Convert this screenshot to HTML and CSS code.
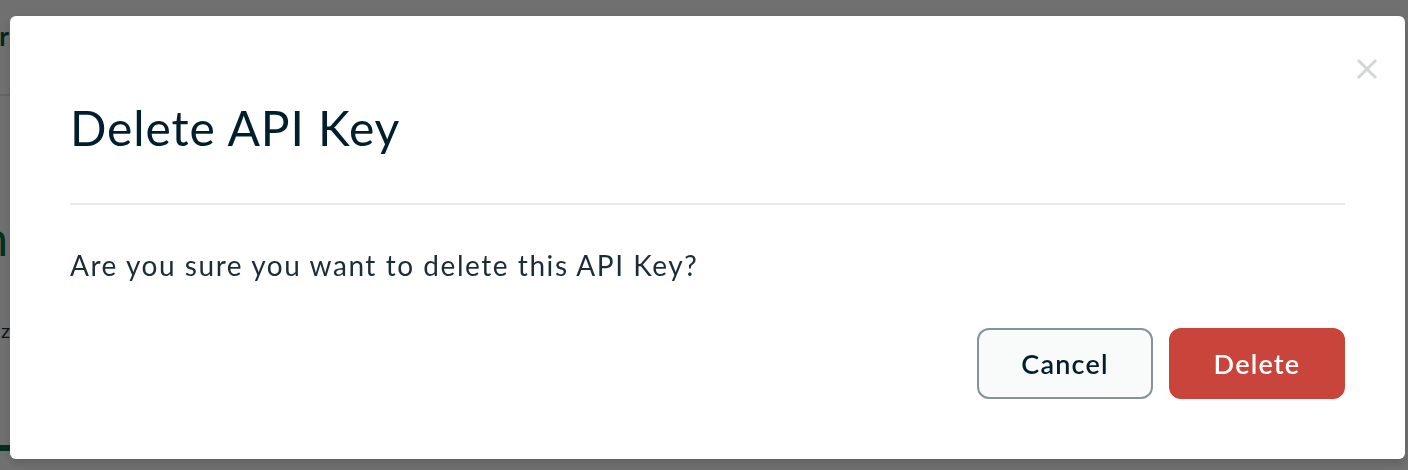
FILE: index.html
```html
<!DOCTYPE html>
<html lang="en">
<head>
<meta charset="utf-8">
<title>Delete API Key</title>
<link rel="stylesheet" href="styles.css">
</head>
<body>
  <div class="page">
    <div class="page-strip">
      <div class="strip-row strip-header"><span class="brand">Access Manager</span></div>
      <div class="strip-row strip-title"><span>Application</span></div>
      <div class="strip-row strip-sub"><span>Quiz</span></div>
      <div class="strip-bar"></div>
    </div>
  </div>
  <div class="overlay">
    <div class="modal" role="dialog" aria-labelledby="modal-title">
      <button class="close" aria-label="Close">
        <svg width="22" height="22" viewBox="0 0 22 22"><path d="M2 2 L20 20 M20 2 L2 20" stroke="#d4d7d7" stroke-width="3" stroke-linecap="butt" fill="none"/></svg>
      </button>
      <h1 id="modal-title" class="modal-title">Delete API Key</h1>
      <hr class="divider">
      <p class="modal-text">Are you sure you want to delete this API Key?</p>
      <div class="actions">
        <button class="btn btn-cancel">Cancel</button>
        <button class="btn btn-danger">Delete</button>
      </div>
    </div>
  </div>
</body>
</html>
```
FILE: styles.css
```css
* { box-sizing: border-box; }
html, body {
  margin: 0;
  padding: 0;
  width: 1408px;
  height: 470px;
  overflow: hidden;
  background: #ffffff;
  font-family: Lato, "Liberation Sans", sans-serif;
}
.page {
  width: 1408px;
  height: 470px;
}
.page-strip {
  width: 10px;
  height: 470px;
  overflow: hidden;
  display: flex;
  flex-direction: column;
}
.strip-row {
  display: flex;
  justify-content: flex-end;
  white-space: nowrap;
}
.strip-header {
  height: 96px;
  border-bottom: 2px solid #e4e8e6;
  padding-top: 20px;
  width: 10px;
}
.strip-header .brand {
  font-size: 26px;
  font-weight: 700;
  color: #0a5c40;
  margin-right: 1px;
}
.strip-title {
  margin-top: 118px;
  font-size: 48px;
  color: #0b6e4c;
  line-height: 48px;
}
.strip-title span { margin-right: 2px; }
.strip-sub {
  margin-top: 56px;
  font-size: 20px;
  color: #1c2d38;
  line-height: 24px;
}
.strip-sub span { margin-right: 0; }
.strip-bar {
  margin-top: 103px;
  height: 6px;
  background: #0d6a48;
}

.overlay {
  position: fixed;
  inset: 0;
  background: rgba(0, 0, 0, 0.56);
  display: flex;
  align-items: flex-start;
  padding: 16px 0 0 10px;
}
.modal {
  position: relative;
  width: 1395px;
  background: #ffffff;
  border-radius: 6px;
  padding: 84px 60px 60px 60px;
  box-shadow: 0 4px 10px rgba(0, 0, 0, 0.15);
  display: flex;
  flex-direction: column;
}
.close {
  position: absolute;
  top: 42px;
  right: 27px;
  width: 22px;
  height: 22px;
  padding: 0;
  border: 0;
  background: none;
  display: flex;
}
.modal-title {
  margin: 0;
  font-size: 48px;
  line-height: 56px;
  font-weight: 400;
  color: #001e2b;
  letter-spacing: 0.9px;
}
.divider {
  margin: 47px 0 0 0;
  border: 0;
  height: 2px;
  background: #e8ebeb;
}
.modal-text {
  margin: 42px 0 0 0;
  font-size: 28px;
  line-height: 36px;
  color: #1c2d38;
  letter-spacing: 1.55px;
}
.actions {
  margin-top: 45px;
  display: flex;
  justify-content: flex-end;
  gap: 16px;
}
.btn {
  width: 176px;
  height: 71px;
  border-radius: 12px;
  font-family: Lato, "Liberation Sans", sans-serif;
  font-size: 27px;
  font-weight: 600;
  letter-spacing: 1.2px;
  display: flex;
  align-items: center;
  justify-content: center;
  padding: 0;
}
.btn-cancel {
  background: #f9fbfa;
  border: 2px solid #889397;
  color: #001e2b;
}
.btn-danger {
  background: #c9443b;
  border: 2px solid #c9443b;
  color: #ffffff;
}
```
